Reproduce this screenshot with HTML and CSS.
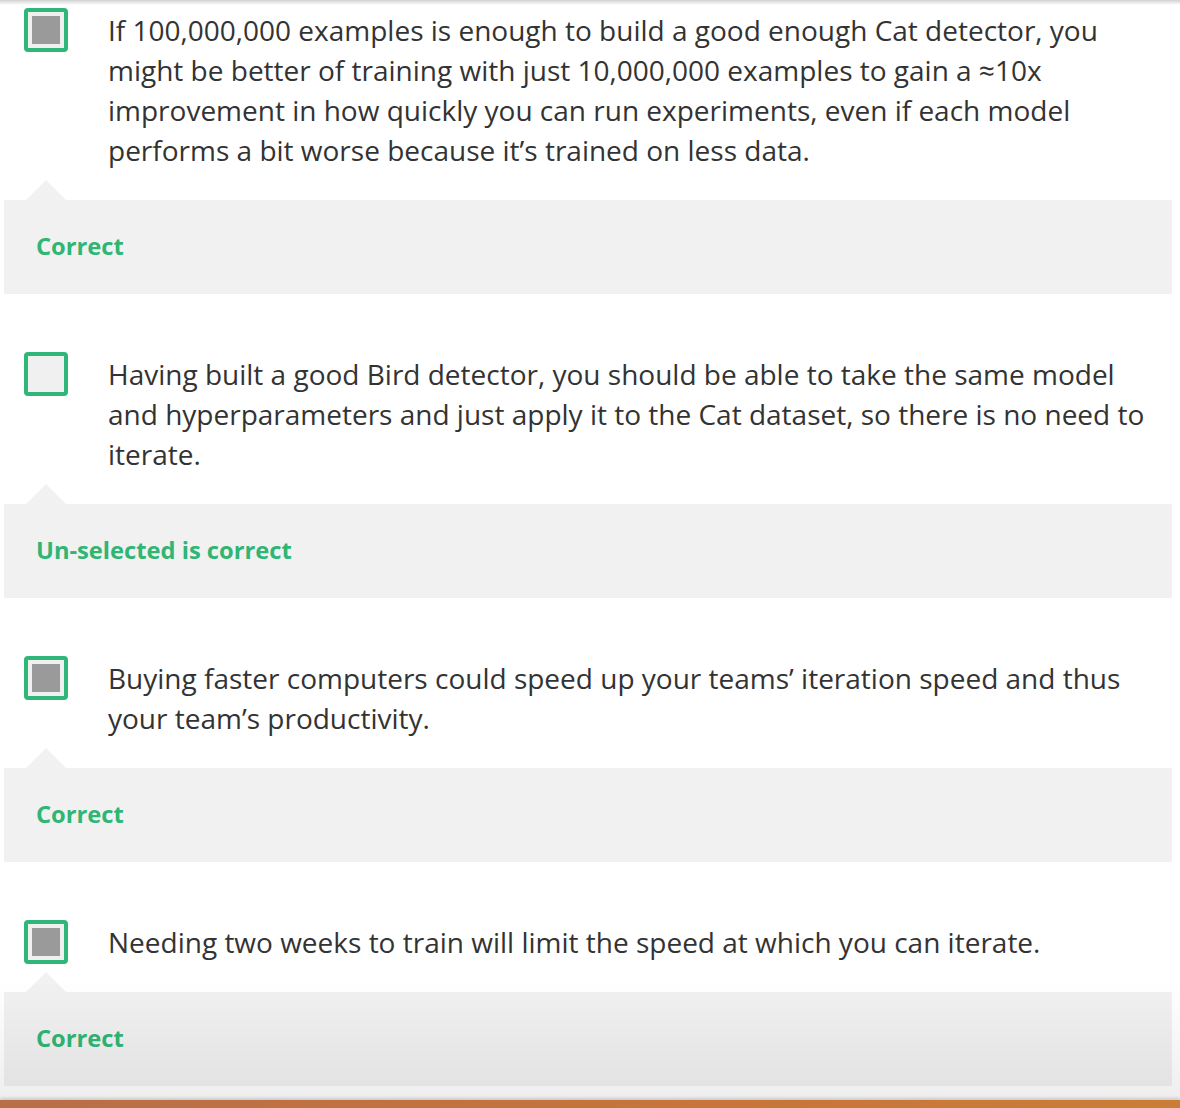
FILE: index.html
```html
<!DOCTYPE html>
<html lang="en">
<head>
<meta charset="utf-8">
<title>Quiz feedback</title>
<link rel="stylesheet" href="styles.css">
</head>
<body>
<div class="top-shade"></div>
<div class="quiz">
  <div class="option">
    <span class="checkbox checked"><span class="mark"></span></span>
    <div class="option-text">If 100,000,000 examples is enough to build a good enough Cat detector, you might be better of training with just 10,000,000 examples to gain a ≈10x improvement in how quickly you can run experiments, even if each model performs a bit worse because it’s trained on less data.</div>
  </div>
  <div class="feedback"><span class="verdict">Correct</span></div>

  <div class="option">
    <span class="checkbox"></span>
    <div class="option-text">Having built a good Bird detector, you should be able to take the same model and hyperparameters and just apply it to the Cat dataset, so there is no need to iterate.</div>
  </div>
  <div class="feedback"><span class="verdict">Un-selected is correct</span></div>

  <div class="option">
    <span class="checkbox checked"><span class="mark"></span></span>
    <div class="option-text">Buying faster computers could speed up your teams’ iteration speed and thus your team’s productivity.</div>
  </div>
  <div class="feedback"><span class="verdict">Correct</span></div>

  <div class="option">
    <span class="checkbox checked"><span class="mark"></span></span>
    <div class="option-text">Needing two weeks to train will limit the speed at which you can iterate.</div>
  </div>
  <div class="feedback"><span class="verdict">Correct</span></div>
</div>
<div class="bottom-fade"></div>
<div class="bottom-bar"></div>
</body>
</html>
```
FILE: styles.css
```css
html, body {
  margin: 0;
  padding: 0;
  background: #ffffff;
}
body {
  font-family: "Open Sans", "DejaVu Sans", sans-serif;
  color: #333333;
  height: 1108px;
  overflow: hidden;
  position: relative;
}
.top-shade {
  position: absolute;
  top: 0;
  left: 0;
  right: 0;
  height: 5px;
  background: linear-gradient(to bottom, rgba(0,0,0,0.18), rgba(0,0,0,0));
  z-index: 2;
}
.quiz {
  padding: 10px 8px 0 4px;
}
.option {
  display: flex;
  align-items: flex-start;
  padding-left: 20px;
  margin-top: 60px;
}
.option:first-child {
  margin-top: 0;
}
.checkbox {
  flex: 0 0 auto;
  width: 36px;
  height: 36px;
  margin: -2px 0;
  border: 4px solid #31b679;
  border-radius: 4px;
  background: #f0f0f0;
  display: flex;
  align-items: center;
  justify-content: center;
}
.mark {
  width: 28px;
  height: 28px;
  background: #9a9a9a;
}
.option-text {
  margin-left: 40px;
  font-size: 28px;
  line-height: 40px;
  width: 1052px;
}
.feedback {
  position: relative;
  margin-top: 30px;
  height: 94px;
  background: #f1f1f1;
  display: flex;
  align-items: center;
  padding-left: 32px;
}
.feedback::before {
  content: "";
  position: absolute;
  left: 22px;
  top: -20px;
  border-left: 20px solid transparent;
  border-right: 20px solid transparent;
  border-bottom: 20px solid #f1f1f1;
}
.verdict {
  color: #2fb574;
  font-weight: 700;
  font-size: 23.7px;
  padding-bottom: 3px;
}
.bottom-fade {
  position: absolute;
  left: 0;
  right: 0;
  bottom: 8px;
  height: 120px;
  background: linear-gradient(to bottom, rgba(0,0,0,0), rgba(0,0,0,0.065));
  pointer-events: none;
}
.bottom-bar {
  position: absolute;
  left: 0;
  right: 0;
  bottom: 0;
  height: 8px;
  background: linear-gradient(to right, #b86e48, #c7753a 60%, #cb7d37);
  box-shadow: 0 -2px 3px rgba(0,0,0,0.15);
}
```
